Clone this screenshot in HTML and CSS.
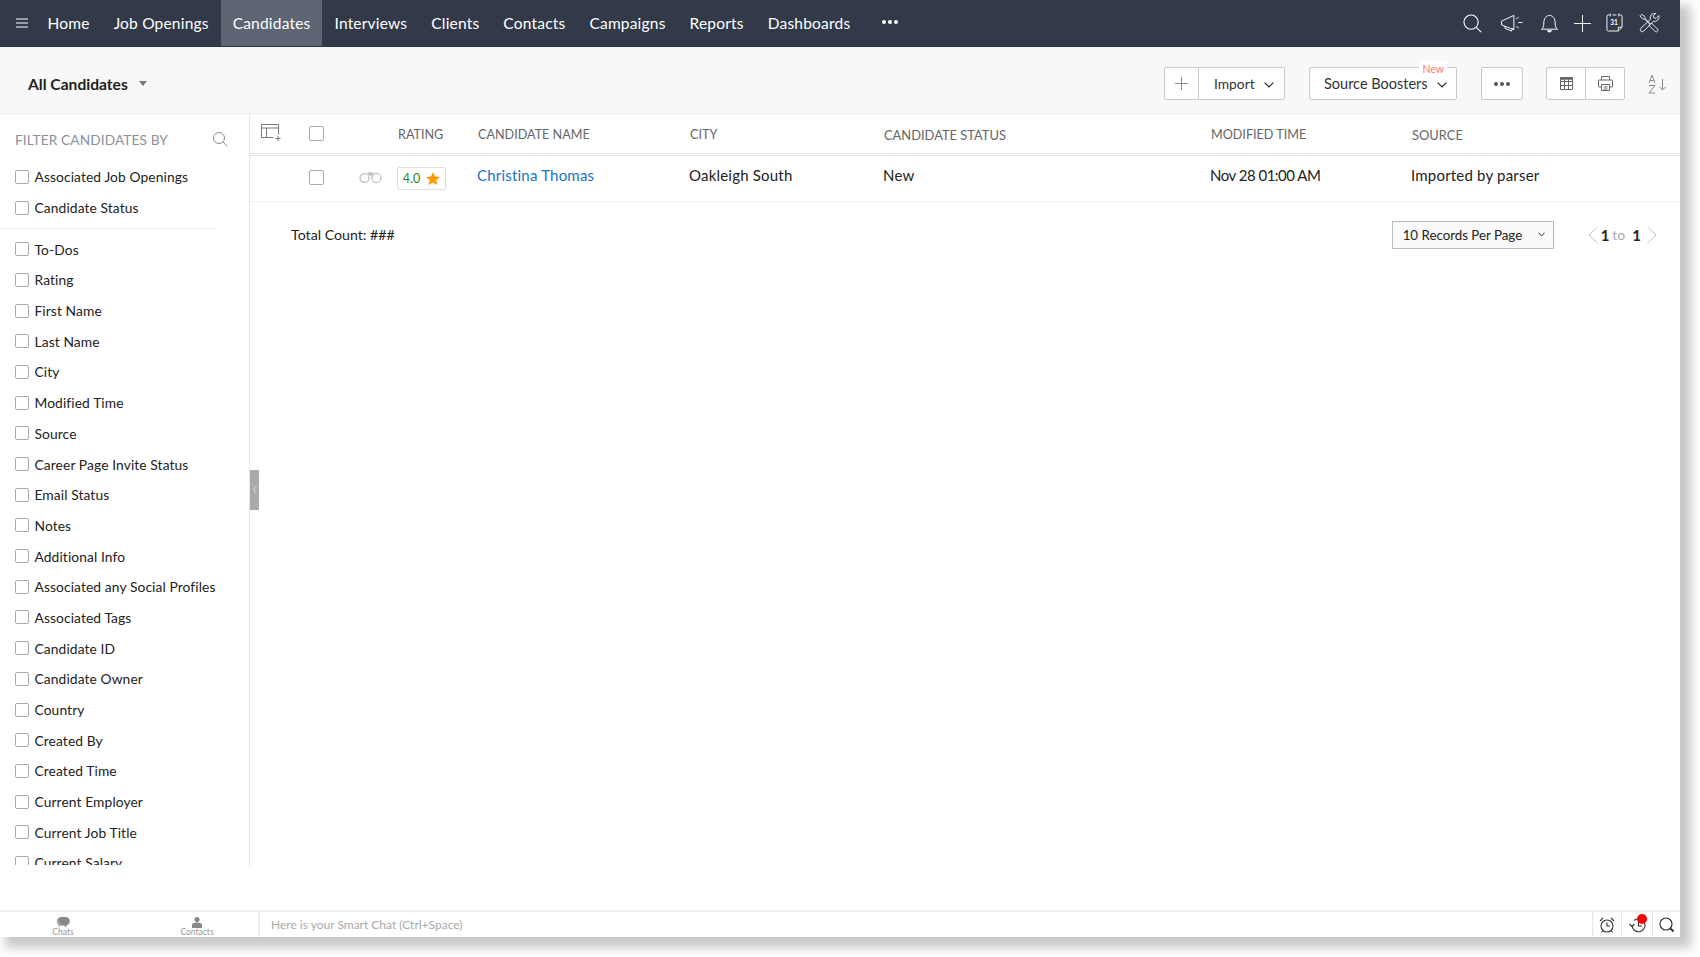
FILE: index.html
```html
<!DOCTYPE html>
<html lang="en">
<head>
<meta charset="utf-8">
<title>Candidates</title>
<link rel="stylesheet" href="styles.css">
</head>
<body>
<div class="window">
  <header class="nav">
    <svg class="burger" viewBox="0 0 12 10" width="12" height="10"><path d="M0 1h12M0 5h12M0 9h12" stroke="#fff" stroke-width="1.2"/></svg>
    <nav class="tabs">
      <a class="tab">Home</a><a class="tab">Job Openings</a><a class="tab active">Candidates</a><a class="tab">Interviews</a><a class="tab">Clients</a><a class="tab">Contacts</a><a class="tab">Campaigns</a><a class="tab">Reports</a><a class="tab">Dashboards</a>
      <span class="navdots"><i></i><i></i><i></i></span>
    </nav>
    <div class="navicons">
      <svg width="19" height="19" viewBox="0 0 20 20" fill="none" stroke="#fff" stroke-width="1.2"><circle cx="8.500" cy="8.500" r="7.500"/><path d="M14 14l5 5"/></svg>
      <svg class="ic-mega" width="23" height="19" viewBox="0 0 23 20" fill="none" stroke="#fff" stroke-width="1"><path d="M1 7.500L14 1.500v15L1 11.500z"/><path d="M5 12.500l-.5 2.500 7 3 1-3"/><path d="M19 3l-2.500 2.500M18.500 9H23M19 15l-2.500-2.500"/></svg>
      <svg class="ic-bell" width="19" height="20" viewBox="0 0 20 20" fill="none" stroke="#fff" stroke-width="1"><path d="M1.500 16.500c2-1.500 2.500-3 2.500-6.500 0-4.500 2.500-8 6-8s6 3.500 6 8c0 3.500.5 5 2.500 6.500z"/><path d="M8 17.500a2 2 0 0 0 4 0" fill="#fff"/></svg>
      <svg class="ic-tight" width="17" height="17" viewBox="0 0 18 18" stroke="#fff" stroke-width="1"><path d="M0 9h18M9 0v18"/></svg>
      <svg class="ic-tight" width="17" height="20" viewBox="0 0 18 20" fill="none" stroke="#fff" stroke-width="1"><path d="M4 1.500H2.500A1.500 1.500 0 0 0 1 3v14a1.500 1.500 0 0 0 1.500 1.500H13l4-4V3a1.500 1.500 0 0 0-1.500-1.500H14M7 1.500h4M13 18.500v-4h4"/><path d="M4.500 0v3M13.500 0v3"/><text x="4.500" y="12.500" class="cal31">31</text></svg>
      <svg width="21" height="20" viewBox="0 0 22 20" fill="none" stroke="#fff" stroke-width=".9"><path d="M1 2.500L2.500 1 6 3l.5 2.500 5.500 5.500 1-1 6.500 6.500a1.800 1.800 0 0 1-2.500 2.500l-6.500-6.500 1-1L6 6l-2.500-.5z"/><path d="M20.800 2.200l-3 3-2.300-.7-.7-2.300 3-2.400a4.800 4.800 0 0 0-5.800 6.300L2 15.500a2.100 2.100 0 0 0 3 3L15 8.300a4.800 4.800 0 0 0 5.800-6.100z"/></svg>
    </div>
  </header>

  <div class="toolbar">
    <div class="viewsel">All Candidates<span class="caret"></span></div>
    <div class="tools">
      <div class="btngroup plusimport">
        <span class="btn plusbtn"><svg width="13" height="13" viewBox="0 0 13 13" stroke="#888" stroke-width="1"><path d="M0 6.500h13M6.500 0v13"/></svg></span>
        <span class="btn importbtn">Import<svg class="chev" width="10" height="6" viewBox="0 0 10 6" fill="none" stroke="#222" stroke-width="1.2"><path d="M.7.7L5 5l4.300-4.300"/></svg></span>
      </div>
      <div class="btngroup boost">
        <span class="btn boostbtn">Source Boosters<svg class="chev" width="10" height="6" viewBox="0 0 10 6" fill="none" stroke="#222" stroke-width="1.2"><path d="M.7.7L5 5l4.300-4.300"/></svg></span>
        <span class="newtag">New</span>
      </div>
      <div class="btngroup more"><span class="btn dotsbtn"><i></i><i></i><i></i></span></div>
      <div class="btngroup views">
        <span class="btn viewbtn"><svg width="13" height="13" viewBox="0 0 13 13" fill="none" stroke="#666"><path d="M.5.500h12v12H.5zM.5 4.500h12M.5 8.500h12M4.500 2.500v10M8.500 2.500v10"/><path d="M0 1.500h13" stroke-width="2.500"/></svg></span>
        <span class="btn viewbtn"><svg width="15" height="15" viewBox="0 0 15 15" fill="none" stroke="#666"><path d="M3.500 4V.5h8V4"/><path d="M3.500 11H1a.5.5 0 0 1-.5-.5v-6A.5.5 0 0 1 1 4h13a.5.500 0 0 1 .5.5v6a.5.500 0 0 1-.5.5h-2.500"/><path d="M3.500 8.500h8v6h-8zM5.500 11h4M5.500 13h4"/></svg></span>
      </div>
      <svg class="sorticon" width="19" height="20" viewBox="0 0 19 20" fill="none" stroke="#888"><path d="M1 9l3-8 3 8M2 6.500h4M1 11.500h6l-6 7.500h6"/><path d="M14.500 5v11M11.500 13l3 3 3-3"/></svg>
    </div>
  </div>

  <div class="body">
    <aside class="sidebar">
      <div class="sidescroll">
      <div class="sidehead">
        <span class="sidetitle">FILTER CANDIDATES BY</span>
        <svg width="15" height="15" viewBox="0 0 15 15" fill="none" stroke="#8d8d8d"><circle cx="6" cy="6" r="5.500"/><path d="M10 10l4.500 4.500"/></svg>
      </div>
      <label class="frow"><span class="cb"></span>Associated Job Openings</label>
      <label class="frow"><span class="cb"></span>Candidate Status</label>
      <div class="sidesep"></div>
      <label class="frow"><span class="cb"></span>To-Dos</label>
      <label class="frow"><span class="cb"></span>Rating</label>
      <label class="frow"><span class="cb"></span>First Name</label>
      <label class="frow"><span class="cb"></span>Last Name</label>
      <label class="frow"><span class="cb"></span>City</label>
      <label class="frow"><span class="cb"></span>Modified Time</label>
      <label class="frow"><span class="cb"></span>Source</label>
      <label class="frow"><span class="cb"></span>Career Page Invite Status</label>
      <label class="frow"><span class="cb"></span>Email Status</label>
      <label class="frow"><span class="cb"></span>Notes</label>
      <label class="frow"><span class="cb"></span>Additional Info</label>
      <label class="frow"><span class="cb"></span>Associated any Social Profiles</label>
      <label class="frow"><span class="cb"></span>Associated Tags</label>
      <label class="frow"><span class="cb"></span>Candidate ID</label>
      <label class="frow"><span class="cb"></span>Candidate Owner</label>
      <label class="frow"><span class="cb"></span>Country</label>
      <label class="frow"><span class="cb"></span>Created By</label>
      <label class="frow"><span class="cb"></span>Created Time</label>
      <label class="frow"><span class="cb"></span>Current Employer</label>
      <label class="frow"><span class="cb"></span>Current Job Title</label>
      <label class="frow"><span class="cb"></span>Current Salary</label>
      </div>
    </aside>

    <main class="content">
      <span class="handle"><svg width="4" height="8" viewBox="0 0 4 8" fill="none" stroke="#ddd"><path d="M3.500.5L.5 4l3 3.500"/></svg></span>
      <div class="grid thead">
        <svg class="tblicon" width="20" height="17" viewBox="0 0 20 17" fill="none" stroke="#777"><path d="M17.500 10.500V.5H.5v13h12M.5 4h17M5.500 4v9.500"/><path d="M17 12v5M14.500 14.500h5"/></svg>
        <span class="cb big"></span>
        <span></span>
        <span class="th">RATING</span>
        <span class="th">CANDIDATE NAME</span>
        <span class="th">CITY</span>
        <span class="th wide">CANDIDATE STATUS</span>
        <span class="th">MODIFIED TIME</span>
        <span class="th wide">SOURCE</span>
      </div>
      <div class="grid trow">
        <span></span>
        <span class="cb big"></span>
        <svg class="binos" width="23" height="11" viewBox="0 0 23 11" fill="none" stroke="#bbb" stroke-width="1.2"><circle cx="5.500" cy="6" r="4.500"/><circle cx="17.500" cy="6" r="4.500"/><path d="M8 .5h7l-3.500 4z" fill="#bbb" stroke="none"/></svg>
        <span class="badge">4.0<svg width="14" height="13" viewBox="0 0 14 13"><path d="M7 0l2 4.500 5 .5-3.800 3.200L11.400 13 7 10.400 2.600 13l1.200-4.800L0 5l5-.5z" fill="#f90"/></svg></span>
        <a class="td link">Christina Thomas</a>
        <span class="td">Oakleigh South</span>
        <span class="td nudge">New</span>
        <span class="td tdtime">Nov 28 01:00 AM</span>
        <span class="td nudge">Imported by parser</span>
      </div>
      <div class="pager">
        <span class="total">Total Count: ###</span>
        <span class="perpage">10 Records Per Page<svg width="7" height="5" viewBox="0 0 7 5" fill="none" stroke="#333"><path d="M.5.700L3.500 4l3-3.300"/></svg></span>
        <span class="pages">
          <svg width="10" height="18" viewBox="0 0 11 18" fill="none" stroke="#bbb"><path d="M10 .5L1 9l9 8.500"/></svg>
          <b>1</b><span class="to">to</span><b>1</b>
          <svg width="10" height="18" viewBox="0 0 11 18" fill="none" stroke="#bbb"><path d="M1 .5L10 9l-9 8.500"/></svg>
        </span>
      </div>
    </main>
  </div>

  <footer class="foot">
    <div class="footleft">
      <span class="fitem">
        <svg width="16" height="13" viewBox="0 0 16 13"><path d="M6 0h5a5 5 0 0 1 5 5 5 5 0 0 1-4 4.800L12 12.500 9 10H6a5 5 0 0 1 0-10z" fill="#888"/><path d="M2 2.500A5 5 0 0 0 3 10v2l3-2z" fill="#aaa"/></svg>
        <span>Chats</span>
      </span>
      <span class="fitem">
        <svg width="12" height="13" viewBox="0 0 12 13" fill="#888"><circle cx="6" cy="3" r="3"/><path d="M0 13V9.500C0 7.500 2 6.500 6 6.500s6 1 6 3V13z"/></svg>
        <span>Contacts</span>
      </span>
    </div>
    <div class="smart">Here is your Smart Chat (Ctrl+Space)</div>
    <div class="footright">
      <span class="fbtn"><svg width="16" height="16" viewBox="0 0 16 16" fill="none" stroke="#333" stroke-width="1.100"><circle cx="8" cy="9" r="6"/><path d="M8 5.500V9h3M1 4l3-3M15 4l-3-3M3.500 14l-1 1.500M12.500 14l1 1.500"/></svg></span>
      <span class="fbtn mid"><svg width="17" height="16" viewBox="0 0 17 16" fill="none" stroke="#333" stroke-width="1.100"><path d="M3 8a6.500 6.500 0 1 0 2-4.500"/><path d="M9.500 5v4h3.500M.5 7L3 9.500 5.500 7"/></svg><i class="dot"></i></span>
      <span class="fbtn last"><svg width="16" height="16" viewBox="0 0 16 16" fill="none" stroke="#333" stroke-width="1.200"><circle cx="7" cy="7" r="6"/><path d="M11.500 11.500l3 3" stroke-width="2"/></svg></span>
    </div>
  </footer>
</div>
</body>
</html>
```

FILE: styles.css
```css
* { box-sizing: border-box; }
html, body { margin: 0; padding: 0; background: #fff; }
body { font-family: Lato, "Open Sans", sans-serif; color: #222; height: 957px; overflow: hidden; }
i { display: block; }

.window {
  width: 1680px;
  height: 937px;
  background: #fff;
  display: flex;
  flex-direction: column;
  box-shadow: 8px 8px 10px 3px rgba(0,0,0,.22);
}

/* top nav */
.nav {
  height: 47px;
  flex: none;
  background: #323a4a;
  border-bottom: 1px solid #2a3140;
  display: flex;
  align-items: center;
  color: #fff;
}
.burger { margin-left: 16px; flex: none; }
.tabs { display: flex; align-items: stretch; height: 100%; margin-left: 7.500px; }
.tab {
  padding: 0 12px;
  display: flex;
  align-items: center;
  font-size: 15.500px;
  letter-spacing: .2px;
}
.tab.active { background: #5d6472; }
.navdots { display: flex; gap: 2px; align-items: center; margin-left: 20px; margin-top: -2px; }
.navdots i { width: 4px; height: 4px; border-radius: 50%; background: #fff; }
.navicons { margin-left: auto; padding-right: 20px; display: flex; align-items: center; gap: 16px; }
.ic-mega { margin-left: 2px; }
.ic-bell { margin-left: 1px; }
.ic-tight { margin-left: -1px; }
.cal31 { font: 700 7px Lato, sans-serif; fill: #fff; stroke: none; }

/* toolbar */
.toolbar {
  height: 67px;
  flex: none;
  background: #f8f8f8;
  border-bottom: 1px solid #ececec;
  padding-top: 7px;
  display: flex;
  align-items: center;
  justify-content: space-between;
}
.viewsel {
  margin-left: 28px;
  font-size: 15.600px;
  font-weight: 700;
  color: #222;
  display: flex;
  align-items: center;
}
.caret { width: 0; height: 0; border: 4px solid transparent; border-top: 5px solid #777; border-bottom: 0; margin-left: 11px; }
.tools { display: flex; align-items: center; padding-right: 13px; }
.btngroup { display: flex; height: 33px; border: 1px solid #c9c9c9; border-radius: 2px; background: #fff; position: relative; left: 1px; }
.btn { display: flex; align-items: center; font-size: 14.500px; color: #333; }
.plusimport { width: 121px; }
.plusbtn { width: 34px; justify-content: center; border-right: 1px solid #c9c9c9; }
.importbtn { flex: 1; padding-left: 15px; font-size: 13.800px; }
.chev { margin-left: 9px; margin-top: 2px; }
.boost { width: 148px; margin-left: 24px; }
.boostbtn { flex: 1; padding-left: 14px; }
.newtag { position: absolute; top: -7px; right: 9px; background: #fff; padding: 3px 3px 0; font-size: 10.500px; line-height: 10px; color: #f77; }
.more { width: 42px; margin-left: 24px; }
.dotsbtn { flex: 1; gap: 2px; justify-content: center; }
.dotsbtn i { width: 4px; height: 4px; border-radius: 50%; background: #555; }
.views { margin-left: 23px; width: 79px; }
.viewbtn { flex: 1; justify-content: center; }
.viewbtn + .viewbtn { border-left: 1px solid #c9c9c9; }
.sorticon { margin-left: 24px; }

/* body */
.body { flex: 1; display: flex; min-height: 0; align-items: flex-start; }
.sidebar {
  width: 250px;
  height: 753px;
  flex: none;
  border-right: 1px solid #e8e8e8;
}
.sidescroll { height: 751px; overflow: hidden; padding-left: 15px; }
.sidehead { height: 47.500px; display: flex; align-items: center; justify-content: space-between; padding: 4px 21px 0 0; }
.sidetitle { font-size: 13.700px; color: #8b90a0; letter-spacing: .1px; }
.frow { height: 30.700px; display: flex; align-items: center; font-size: 13.800px; color: #222; letter-spacing: .1px; }
.sidesep { height: 1px; margin: 5px 32px 5px -15px; background: #eee; }
.cb { width: 14px; height: 14px; flex: none; border: 1px solid #aaa; border-radius: 2px; background: #fff; margin-right: 5.500px; }
.cb.big { width: 15px; height: 15px; margin: 0; }

/* content */
.content { flex: 1; position: relative; height: 100%; min-width: 0; }
.handle { position: absolute; left: 0; top: 356px; width: 9px; height: 40px; background: #aaa; display: flex; align-items: center; justify-content: center; }
.grid {
  display: grid;
  grid-template-columns: 59px 50px 38px 80px 212px 193px 328px 200px 1fr;
  align-items: center;
}
.thead { height: 41.500px; border-bottom: 3px double #e4e4e4; }
.tblicon { margin-left: 11px; margin-top: -2px; }
.th { font-size: 12.600px; color: #666; padding: 3px 0 0 1px; }
.th.wide { padding-left: 2px; font-size: 12.900px; }
.trow { height: 46px; border-bottom: 1px solid #f0f0f0; padding-bottom: 4px; }
.trow .cb, .binos { margin-top: 3px; }
.td { font-size: 15px; color: #222; letter-spacing: .2px; margin-top: -2px; }
.td.nudge { padding-left: 1px; }
.tdtime { letter-spacing: -.5px; }
.link { color: #1a73c5; }
.badge {
  width: 49px; height: 23px;
  margin-top: 4px;
  border: 1px solid #e0e0e0;
  border-radius: 2px;
  display: flex; align-items: center; justify-content: center; gap: 6px;
  font-size: 12.500px; color: #2d8a2d;
}
.pager { display: flex; align-items: center; padding: 19px 23px 0 41px; }
.total { font-size: 14.200px; color: #222; }
.perpage {
  margin-left: auto;
  width: 162px; height: 28px;
  border: 1px solid #bbb;
  background: #fafafa;
  display: flex; align-items: center; justify-content: space-between;
  padding: 0 8px 0 10px;
  font-size: 13.300px; color: #222;
}
.pages { margin-left: 34px; display: flex; align-items: center; font-size: 15px; }
.pages b { font-weight: 700; }
.pages b:first-of-type { margin-left: 3px; }
.to { color: #aaa; margin: 0 7px 0 3px; font-size: 14px; }
.pages svg:last-child { margin-left: 6px; }

/* footer */
.foot {
  height: 27px;
  flex: none;
  border-top: 2px solid #eee;
  display: flex;
  overflow: hidden;
  position: relative;
}
.footleft { width: 260px; flex: none; border-right: 2px solid #eee; display: flex; padding-left: 48px; gap: 104px; }
.fitem { width: 30px; display: flex; flex-direction: column; align-items: center; font-size: 8.500px; color: #999; line-height: 9px; white-space: nowrap; padding-top: 5px; }
.smart { flex: 1; padding-left: 11px; font-size: 12px; color: #aaa; line-height: 26px; }
.footright { display: flex; }
.fbtn { width: 29px; display: flex; align-items: center; justify-content: center; border-left: 1px solid #e6e6e6; position: relative; }
.fbtn.mid { width: 31px; }
.fbtn.last { width: 28px; }
.dot { position: absolute; width: 10px; height: 10px; border-radius: 50%; background: #f00; top: 2px; right: 5px; }
```
